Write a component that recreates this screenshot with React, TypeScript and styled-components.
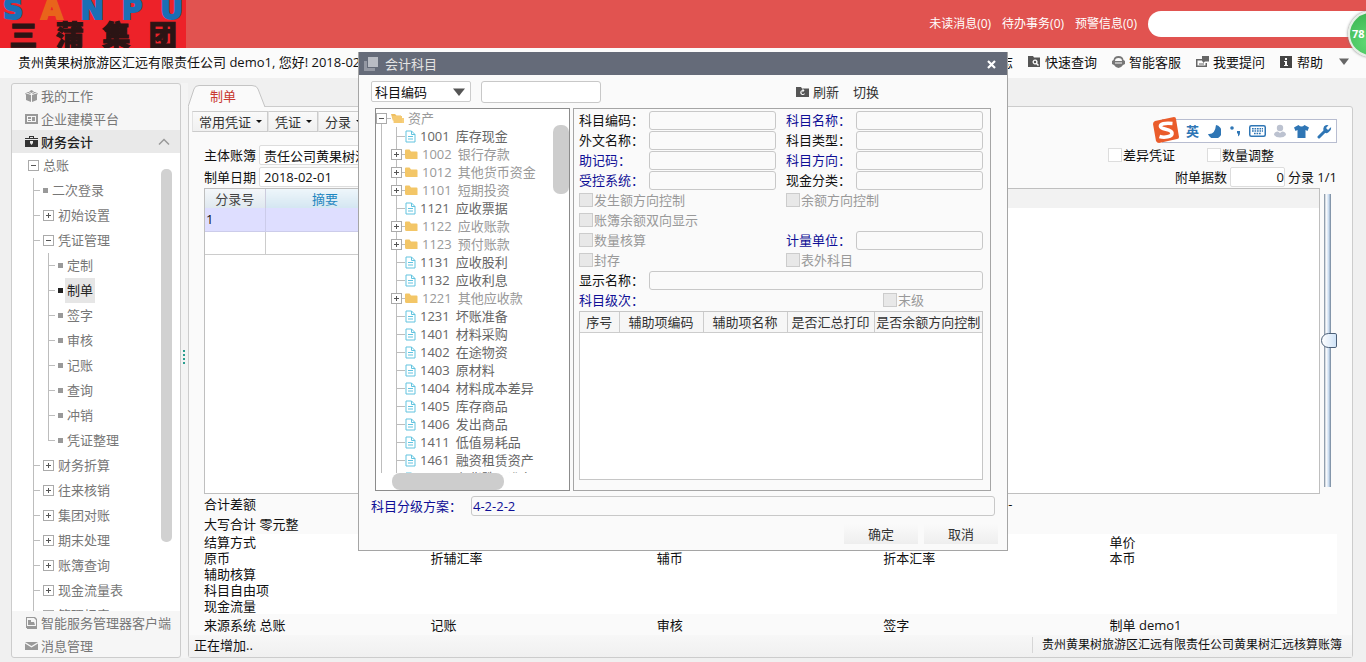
import React from 'react';
import styled, { createGlobalStyle, css } from 'styled-components';

const FONT = "'Open Sans', 'Noto Sans CJK SC', sans-serif";

const GlobalStyle = createGlobalStyle`
  * { box-sizing: border-box; }
  body { margin: 0; background: #f0f0f0; font: 13px/16px ${FONT}; color: #111; white-space: nowrap; }
  button, input, select { font: inherit; color: inherit; margin: 0; }
  button { border: 0; background: none; padding: 0; }
  ul { list-style: none; margin: 0; padding: 0; }
  a { color: inherit; text-decoration: none; }
  svg { flex: none; }
`;

const Page = styled.div`
  display: flex;
  flex-direction: column;
  min-height: 100vh;
  overflow: hidden;
`;

/* ---------- top banner ---------- */
const Banner = styled.header`
  display: flex;
  align-items: center;
  justify-content: space-between;
  height: 48px;
  background: #e15350;
`;
const Logo = styled.div`
  width: 186px;
  height: 48px;
  background: #ed2229;
`;
const LogoLatin = styled.div`
  display: flex;
  justify-content: space-between;
  height: 21px;
  padding: 0 3px;
  font: bold 28px/20px 'DejaVu Sans', sans-serif;
  color: #1a6fb5;
  -webkit-text-stroke: 2px;
  em { font-style: normal; color: #e8641b; }
`;
const LogoHan = styled.div`
  display: flex;
  justify-content: space-around;
  font: 900 28px/26px 'Noto Sans CJK SC', sans-serif;
  color: #2b1414;
  -webkit-text-stroke: 1px;
`;
const BannerRight = styled.nav`
  display: flex;
  align-items: center;
  gap: 11px;
  font-size: 12px;
  color: #fff;
`;
const Search = styled.input`
  width: 218px;
  height: 26px;
  border: 0;
  border-radius: 13px 0 0 13px;
  background: #fff;
`;
const MeterClip = styled.div`
  position: absolute;
  z-index: 5;
  top: 0;
  right: 0;
  width: 30px;
  height: 64px;
  overflow: hidden;
`;
const Meter = styled.div`
  position: absolute;
  top: 11px;
  right: -28px;
  width: 46px;
  height: 46px;
  padding-left: 2px;
  border: 2px solid #e6efe6;
  border-radius: 50%;
  background: radial-gradient(circle at 40% 70%, #5fd873, #35ad4c);
  box-shadow: 0 0 3px #777;
  color: #fff;
  font: bold 11px/42px ${FONT};
`;

/* ---------- greeting bar ---------- */
const SubBar = styled.div`
  display: flex;
  align-items: center;
  justify-content: space-between;
  height: 30px;
  padding: 0 16px 2px 18px;
  background: #fbfbfb;
`;
const Actions = styled.nav`
  display: flex;
  align-items: center;
  gap: 15px;
  a { display: flex; align-items: center; gap: 4px; height: 26px; }
`;

/* ---------- body ---------- */
const Body = styled.div`
  display: flex;
  flex: 1;
  padding: 5px 13px 4px 11px;
`;
const Side = styled.aside`
  display: flex;
  flex-direction: column;
  width: 170px;
  border: 1px solid #ccc;
  border-radius: 3px;
  background: #f6f6f6;
  color: #777;
`;
const SideItem = styled.a<{ $on?: boolean }>`
  display: flex;
  align-items: center;
  gap: 3px;
  height: 23px;
  padding: 0 10px 0 13px;
  ${p => p.$on && css`background: #e9e9e9; color: #222; font-weight: 500;`}
  span { flex: 1; }
`;
const SideTree = styled.div`
  display: flex;
  flex: 1 1 0;
  min-height: 0;
  overflow: hidden;
  background: #fff;
`;
const TreeBox = styled.div`
  flex: 1;
  height: 458px;
  overflow: hidden;
`;
const SideThumb = styled.div`
  width: 11px;
  height: 373px;
  margin: 16px 8px 0 0;
  border-radius: 5px;
  background: #d1d1d1;
`;
const vline = '#bdbdbd';
const TreeRow = styled.div<{ $indent?: number }>`
  display: flex;
  align-items: center;
  height: 25px;
  padding-left: ${p => p.$indent ?? 0}px;
`;
const Branch = styled.ul<{ $left: number; $open?: boolean }>`
  margin-left: ${p => p.$left}px;
  > li { background: linear-gradient(${vline}, ${vline}) 0 0 / 1px 100% no-repeat; }
  > li:last-child { background-size: 1px ${p => (p.$open ? '100%' : '13px')}; }
`;
const Tick = styled.i<{ $w: number; $gap?: number }>`
  width: ${p => p.$w}px;
  height: 1px;
  margin-right: ${p => p.$gap ?? 0}px;
  background: ${vline};
`;
const Bullet = styled.i<{ $on?: boolean }>`
  width: 5px;
  height: 5px;
  margin-right: 2px;
  background: ${p => (p.$on ? '#222' : '#999')};
`;
const NodeText = styled.span<{ $on?: boolean; $box?: boolean }>`
  padding: 0 2px 0 ${p => (p.$box ? 4 : 2)}px;
  line-height: 25px;
  ${p => p.$on && css`background: #e6e6e6; color: #222;`}
`;

const Splitter = styled.div`
  display: flex;
  flex-direction: column;
  align-items: center;
  justify-content: center;
  gap: 2px;
  width: 7px;
  padding: 0 2px 28px 0;
  background: #f4f4f4;
  i { width: 2px; height: 2px; background: #2a9d8f; }
`;
const Main = styled.main`
  display: flex;
  flex: 1;
  flex-direction: column;
  min-width: 0;
  padding-top: 2px;
`;
const Tab = styled.button`
  position: relative;
  align-self: flex-start;
  z-index: 1;
  width: 78px;
  height: 22px;
  margin-bottom: -1px;
  padding-right: 8px;
  color: #c8382f;
  svg { position: absolute; left: 0; top: 0; }
  span { position: relative; }
`;
const Panel = styled.section`
  display: flex;
  flex: 1;
  flex-direction: column;
  padding-top: 4px;
  border: 1px solid #ccc;
  border-radius: 0 3px 3px 3px;
  background: #fafafa;
`;
const ToolBar = styled.div`
  display: flex;
  height: 21px;
  margin: 0 3px 12px;
`;
const ToolButton = styled.button`
  display: flex;
  align-items: center;
  gap: 5px;
  padding: 0 5px 0 6px;
  border: 1px solid #ccc;
  border-left-color: #e2e2e2;
  background: linear-gradient(#fafafa, #f0f0f0);
  color: #333;
`;
const Caret = styled.i`
  border: 3px solid transparent;
  border-top-color: #111;
  border-bottom: 0;
`;
const Content = styled.div`
  display: flex;
  flex: 1;
  flex-direction: column;
  padding: 0 15px;
`;
const HeadRow = styled.div`
  display: flex;
  align-items: center;
  justify-content: space-between;
  height: 22px;
`;
const Group = styled.div<{ $gap?: number; $end?: number }>`
  display: flex;
  align-items: center;
  gap: ${p => p.$gap ?? 0}px;
  padding-right: ${p => p.$end ?? 0}px;
`;
const BookLabel = styled.label`
  display: flex;
  align-items: center;
  gap: 3px;
`;
const PlainInput = styled.input<{ $w: number; $right?: boolean }>`
  width: ${p => p.$w}px;
  height: 20px;
  padding: 0 2px 0 4px;
  border: 1px solid #ddd;
  border-radius: 2px;
  background: #fff;
  ${p => p.$right && css`padding-right: 0; text-align: right;`}
`;
const GridArea = styled.div`
  display: flex;
  flex: 1;
`;
const GridFrame = styled.div`
  flex: 1;
  border: 1px solid #bfbfbf;
  background: linear-gradient(#f2f2f2, #f2f2f2) 0 0 / 100% 19px no-repeat #fff;
`;
const EntryTable = styled.table`
  border-collapse: collapse;
  table-layout: fixed;
  width: 180px;
  th { height: 19px; padding: 0; border-right: 1px solid #ccd; background: linear-gradient(#f4f7fa, #dfe8ef); font-weight: 400; color: #444; }
  th + th { background: linear-gradient(#eef6fb, #d4e6f1); color: #1d86c0; }
  td { height: 23px; padding: 0 1px; border-right: 1px solid #ccc; border-bottom: 1px solid #ccc; }
  tr:first-child td { background: #dedeff; border-color: #ccccea; }
`;
const Range = styled.input`
  appearance: none;
  writing-mode: vertical-lr;
  width: 17px;
  margin: 6px 0 7px;
  background: linear-gradient(90deg, #6f8195, #fff 30%, #c5d9ef 70%, #6f8195) 4px 0 / 7px 100% no-repeat;
  &::-webkit-slider-thumb {
    appearance: none;
    width: 16px;
    height: 15px;
    border: 1px solid #4c6078;
    border-radius: 8px 2px 2px 8px;
    background: linear-gradient(90deg, #fff, #cfe3f7);
  }
`;
const Totals = styled.div<{ $h: number; $white?: boolean }>`
  display: grid;
  grid-template-columns: repeat(5, 1fr);
  align-items: center;
  height: ${p => p.$h}px;
  padding-right: 1px;
  ${p => p.$white && css`background: #fff;`}
`;
const Trail = styled.span`
  grid-column: 4;
  padding-left: 125px;
`;
const Status = styled.footer`
  display: flex;
  align-items: center;
  justify-content: space-between;
  height: 22px;
  padding: 0 10px 2px 5px;
  background: linear-gradient(#f7f7f7, #f0f0f0);
`;
const StatusBook = styled.span`
  padding-left: 9px;
  border-left: 1px solid #d6d6d6;
  font-size: 12px;
`;

/* ---------- tick boxes ---------- */
const TickLabel = styled.label<{ $off?: boolean }>`
  display: flex;
  align-items: center;
  gap: 1px;
  color: ${p => (p.$off ? '#999' : '#111')};
  input {
    appearance: none;
    width: 14px;
    height: 14px;
    border: 1px solid ${p => (p.$off ? '#ccc' : '#ddd')};
    background: ${p => (p.$off ? '#e8e8e8' : '#fff')};
  }
`;

/* ---------- input-method bar ---------- */
const Ime = styled.div`
  position: absolute;
  z-index: 3;
  top: 119px;
  right: 29px;
  display: flex;
  align-items: center;
  justify-content: space-between;
  width: 175px;
  height: 24px;
  padding: 0 4px 0 23px;
  border: 1px solid #b8bdd0;
  background: #fff;
  color: #2f76b5;
  font-weight: 700;
`;
const ImeLogo = styled.svg`
  position: absolute;
  left: -11px;
  top: -4px;
`;

/* ---------- dialog ---------- */
const Overlay = styled.div`
  position: absolute;
  z-index: 4;
  top: 52px;
  left: 0;
  right: 0;
  display: flex;
  justify-content: center;
  pointer-events: none;
`;
const Dialog = styled.section`
  width: 650px;
  border: 1px solid #a5a5a5;
  border-top: 0;
  background: #fafafa;
  pointer-events: auto;
`;
const DialogHead = styled.header`
  display: flex;
  align-items: center;
  gap: 7px;
  height: 23px;
  padding: 0 11px 0 5px;
  background: #656b79;
  color: #e4e4e4;
  span { flex: 1; }
`;
const DialogTools = styled.div`
  display: flex;
  align-items: center;
  height: 33px;
  padding: 0 12px;
  color: #333;
`;
const SelectBox = styled.div`
  position: relative;
  display: flex;
  align-items: center;
  width: 100px;
  margin-right: 10px;
  svg { position: absolute; right: 6px; pointer-events: none; }
`;
const Select = styled.select`
  appearance: none;
  width: 100%;
  height: 21px;
  padding: 0 3px;
  border: 1px solid #ccc;
  border-radius: 2px;
  background: #fff;
  color: #111;
`;
const Box = styled.input<{ $w?: number; $h?: number; $fill?: string }>`
  ${p => (p.$w ? `width: ${p.$w}px;` : 'flex: 1; min-width: 0;')}
  height: ${p => p.$h ?? 19}px;
  padding: 0 1px;
  border: 1px solid #c8c8c8;
  border-radius: 3px;
  background: ${p => p.$fill ?? '#fafafa'};
`;
const ToolLink = styled.button<{ $push?: number }>`
  display: flex;
  align-items: center;
  gap: 4px;
  margin-left: ${p => p.$push ?? 0}px;
`;
const Split = styled.div`
  display: flex;
  gap: 3px;
  height: 383px;
  padding: 0 16px;
`;
const Accounts = styled.div`
  display: flex;
  flex: none;
  flex-direction: column;
  width: 195px;
  border: 1px solid #8c8c8c;
  background: #fff;
`;
const AccountsView = styled.div`
  display: flex;
  height: 364px;
`;
const AccountsClip = styled.div`
  flex: 1;
  min-width: 0;
  overflow: hidden;
  background: linear-gradient(${vline}, ${vline}) 5px 14px / 1px 100% no-repeat;
`;
const AccountsThumb = styled.div`
  width: 16px;
  height: 69px;
  margin-top: 16px;
  border-radius: 7px;
  background: #cdcdcd;
`;
const AccountsHThumb = styled.div`
  width: 112px;
  height: 17px;
  margin-left: 16px;
  border-radius: 8px;
  background: #cdcdcd;
`;
const AccountRow = styled.li<{ $folder?: boolean }>`
  display: flex;
  align-items: center;
  height: 18px;
  color: ${p => (p.$folder ? '#999' : '#666')};
`;
const AccountList = styled.ul`
  margin-left: 15px;
  background: linear-gradient(${vline}, ${vline}) 5px 0 / 1px 100% no-repeat;
`;
const Lead = styled.span`
  display: flex;
  flex: none;
  align-items: center;
  justify-content: flex-end;
  width: 14px;
`;
const AccountName = styled.span`
  display: flex;
  gap: 6px;
  padding-left: 4px;
`;
const Detail = styled.div`
  display: flex;
  flex: 1;
  flex-direction: column;
  min-width: 0;
  padding: 1px 7px 10px 5px;
  border: 1px solid #a5a5a5;
`;
const Fields = styled.div`
  display: grid;
  grid-template-columns: repeat(2, minmax(0, 1fr));
  column-gap: 10px;
  grid-auto-rows: 20px;
  align-items: center;
`;
const Field = styled.label<{ $blue?: boolean; $wide?: boolean }>`
  display: flex;
  align-items: center;
  color: ${p => (p.$blue ? '#0f0f96' : '#111')};
  ${p => p.$wide && css`grid-column: 1 / -1;`}
  > span { flex: none; width: 70px; }
`;
const Level = styled.div`
  grid-column: 1 / -1;
  display: flex;
  justify-content: space-between;
  padding-right: 59px;
`;
const AuxFrame = styled.div`
  flex: 1;
  margin-top: 1px;
  border: 1px solid #c6c6c6;
  background: #fff;
`;
const AuxTable = styled.table`
  width: 100%;
  table-layout: fixed;
  border-collapse: collapse;
  th { height: 20px; padding: 0; border-right: 1px solid #ccc; border-bottom: 1px solid #ccc; background: #f6f6f6; font-weight: 400; color: #333; }
  th:last-child { border-right: 0; }
`;
const Scheme = styled.label`
  display: flex;
  align-items: center;
  padding: 5px 12px 8px;
  color: #0f0f96;
  span { width: 100px; }
`;
const Buttons = styled.div`
  display: flex;
  justify-content: flex-end;
  gap: 6px;
  padding: 0 9px 6px;
`;
const PushButton = styled.button`
  width: 74px;
  height: 20px;
  background: linear-gradient(#fafafa, #eeeeee);
  color: #333;
`;

/* ---------- drawings ---------- */
const Toggle = ({ open }: { open?: boolean }) => (
  <svg width="11" height="11" viewBox="0 0 11 11" shapeRendering="crispEdges">
    <rect x=".5" y=".5" width="10" height="10" fill="#fff" stroke="#aaa" />
    <path d={open ? 'M3 5.500h5' : 'M3 5.500h5M5.500 3v5'} stroke="#555" />
  </svg>
);
const Folder = () => (
  <svg width="13" height="11" viewBox="0 0 13 11">
    <path d="M0 1.500Q0 .5 1 .5h3.500l1.500 2h5.500q1 0 1 1V10H1.500Q0 10 0 8.500z" fill="#f3c667" />
  </svg>
);
const OpenFolder = () => (
  <svg width="13" height="11" viewBox="0 0 13 11">
    <path d="M0 1h4l1.500 1.500H10V4H3.500L2 8z" fill="#efc063" />
    <path d="M4 5h9v5H2.500z" fill="#f7cf7c" />
    <path d="M1 3h10v7H3z" fill="#f5ca72" />
  </svg>
);
const Leaf = () => (
  <svg width="11" height="13" viewBox="0 0 11 13" fill="none" stroke="#62c3df">
    <path d="M1 1h5.500L10 4.500V12H1zM6.500 1v3.500H10M3 6.500h5M3 9h5" />
  </svg>
);
const Gray = ({ children, color = '#999' }: { children: React.ReactNode; color?: string }) => (
  <svg width="13" height="12" viewBox="0 0 13 12" fill={color}>{children}</svg>
);
const Chevron = () => (
  <svg width="12" height="8" viewBox="0 0 12 8" fill="none" stroke="#999" strokeWidth="1.500"><path d="M1 6.500 6 1.500l5 5" /></svg>
);

/* ---------- data ---------- */
type Node = { name: string; kind: 'leaf' | 'closed' | 'open' };
const ledger: Node[] = [
  { name: '二次登录', kind: 'leaf' },
  { name: '初始设置', kind: 'closed' },
  { name: '凭证管理', kind: 'open' },
  { name: '财务折算', kind: 'closed' },
  { name: '往来核销', kind: 'closed' },
  { name: '集团对账', kind: 'closed' },
  { name: '期末处理', kind: 'closed' },
  { name: '账簿查询', kind: 'closed' },
  { name: '现金流量表', kind: 'closed' },
  { name: '管理报表', kind: 'closed' },
];
const vouchers = ['定制', '制单', '签字', '审核', '记账', '查询', '冲销', '凭证整理'];
const accounts: [string, string, boolean][] = [
  ['1001', '库存现金', false], ['1002', '银行存款', true], ['1012', '其他货币资金', true],
  ['1101', '短期投资', true], ['1121', '应收票据', false], ['1122', '应收账款', true],
  ['1123', '预付账款', true], ['1131', '应收股利', false], ['1132', '应收利息', false],
  ['1221', '其他应收款', true], ['1231', '坏账准备', false], ['1401', '材料采购', false],
  ['1402', '在途物资', false], ['1403', '原材料', false], ['1404', '材料成本差异', false],
  ['1405', '库存商品', false], ['1406', '发出商品', false], ['1411', '低值易耗品', false],
  ['1461', '融资租赁资产', false], ['1471', '存货跌价准备', false],
];
const detailRows: string[][] = [
  ['结算方式', '', '', '', '单价'],
  ['原币', '折辅汇率', '辅币', '折本汇率', '本币'],
  ['辅助核算'], ['科目自由项'], ['现金流量'],
];

const Row5 = ({ cells, h, white }: { cells: string[]; h: number; white?: boolean }) => (
  <Totals $h={h} $white={white}>{cells.map((c, i) => <span key={i}>{c}</span>)}</Totals>
);
const Check = ({ text, off }: { text: string; off?: boolean }) => (
  <TickLabel $off={off}><input type="checkbox" disabled={off} />{text}</TickLabel>
);
const TextField = ({ text, blue, wide }: { text: string; blue?: boolean; wide?: boolean }) => (
  <Field $blue={blue} $wide={wide}><span>{text}：</span><Box readOnly /></Field>
);

const Sidebar = () => (
  <Side>
    <SideItem href="#">
      <Gray><path d="M6.500 0 9 1.500 6.500 3 4 1.500zM0 3l6 2v7l-5-2V5zM13 3 7 5v7l5-2V5zM1 2l3 0 2 2-1 0zM12 2H9L7 4h1z" /></Gray>
      <span>我的工作</span>
    </SideItem>
    <SideItem href="#">
      <Gray><path fillRule="evenodd" d="M0 1h13v10H0zM2 3v6h9V3zM3 4h3v2H3zM3 7h3v1H3zM7 4h3v4H7z" /></Gray>
      <span>企业建模平台</span>
    </SideItem>
    <SideItem href="#" $on>
      <Gray color="#333"><path fillRule="evenodd" d="M4 0h5v2h4v1H0V2h4zM5 1v1h3V1zM0 4h13v7H0zM5 5v2l1.500 2L8 7V5z" /></Gray>
      <span>财务会计</span>
      <Chevron />
    </SideItem>
    <SideTree>
      <TreeBox>
        <ul>
          <li>
            <TreeRow $indent={16}><Toggle open /><NodeText $box>总账</NodeText></TreeRow>
            <Branch $left={21} $open>
              {ledger.map(n => (
                <li key={n.name}>
                  <TreeRow>
                    <Tick $w={7} $gap={3} />
                    {n.kind === 'leaf' ? <Bullet /> : <Toggle open={n.kind === 'open'} />}
                    <NodeText $box={n.kind !== 'leaf'}>{n.name}</NodeText>
                  </TreeRow>
                  {n.kind === 'open' && (
                    <Branch $left={15}>
                      {vouchers.map(v => (
                        <li key={v}>
                          <TreeRow>
                            <Tick $w={7} $gap={3} />
                            <Bullet $on={v === '制单'} />
                            <NodeText $on={v === '制单'}>{v}</NodeText>
                          </TreeRow>
                        </li>
                      ))}
                    </Branch>
                  )}
                </li>
              ))}
            </Branch>
          </li>
        </ul>
      </TreeBox>
      <SideThumb />
    </SideTree>
    <SideItem href="#">
      <Gray><path fillRule="evenodd" d="M1 0h9l2 2v9H1zM2 1v8h9V3L9 1zM3 3h3v2h3l1 3H3zM2 11h10v1H2z" /></Gray>
      <span>智能服务管理器客户端</span>
    </SideItem>
    <SideItem href="#">
      <Gray><path d="M0 2h13L6.500 6zM0 3.500 6.500 7.500 13 3.500V10H0z" /></Gray>
      <span>消息管理</span>
    </SideItem>
  </Side>
);

const AccountDialog = () => (
  <Overlay>
    <Dialog role="dialog" aria-label="会计科目">
      <DialogHead>
        <svg width="14" height="14" viewBox="0 0 14 14"><path d="M4 0h10v10H4z" fill="#b9bcc4" /><path d="M0 4h3v7h8v3H0z" fill="#9498a3" /></svg>
        <span>会计科目</span>
        <button aria-label="关闭">
          <svg width="9" height="9" viewBox="0 0 9 9" stroke="#fff" strokeWidth="2.200"><path d="m1 1 7 7M8 1 1 8" /></svg>
        </button>
      </DialogHead>
      <DialogTools>
        <SelectBox>
          <Select aria-label="查询方式"><option>科目编码</option></Select>
          <svg width="12" height="8" viewBox="0 0 12 8"><path d="M0 .5h12L6 8z" fill="#555" /></svg>
        </SelectBox>
        <Box $w={120} $h={22} $fill="#fff" aria-label="查询内容" />
        <ToolLink $push={195}>
          <Gray color="#555"><path fillRule="evenodd" d="M0 1h5l1 1.500h7V11H0zM6.500 4A2.500 2.500 0 1 0 9 7.500H8A1.500 1.500 0 1 1 6.500 5v1.500l2-2-2-2z" /></Gray>
          刷新
        </ToolLink>
        <ToolLink $push={14}>切换</ToolLink>
      </DialogTools>
      <Split>
        <Accounts>
          <AccountsView>
            <AccountsClip>
              <ul>
                <AccountRow $folder><Toggle open /><Tick $w={4} /><OpenFolder /><AccountName>资产</AccountName></AccountRow>
              </ul>
              <AccountList>
                {accounts.map(([code, name, folder]) => (
                  <AccountRow key={code} $folder={folder}>
                    <Lead>{folder ? <><Toggle /><Tick $w={3} /></> : <Tick $w={8} />}</Lead>
                    {folder ? <Folder /> : <Leaf />}
                    <AccountName><span>{code}</span><span>{name}</span></AccountName>
                  </AccountRow>
                ))}
              </AccountList>
            </AccountsClip>
            <AccountsThumb />
          </AccountsView>
          <AccountsHThumb />
        </Accounts>
        <Detail>
          <Fields>
            <TextField text="科目编码" /><TextField text="科目名称" blue />
            <TextField text="外文名称" /><TextField text="科目类型" />
            <TextField text="助记码" blue /><TextField text="科目方向" blue />
            <TextField text="受控系统" blue /><TextField text="现金分类" />
            <Check off text="发生额方向控制" /><Check off text="余额方向控制" />
            <Check off text="账簿余额双向显示" /><span />
            <Check off text="数量核算" /><TextField text="计量单位" blue />
            <Check off text="封存" /><Check off text="表外科目" />
            <TextField text="显示名称" wide />
            <Level><Field as="span" $blue>科目级次：</Field><Check off text="末级" /></Level>
          </Fields>
          <AuxFrame>
            <AuxTable>
              <colgroup><col width="39" /><col width="84" /><col width="84" /><col width="87" /><col /></colgroup>
              <thead><tr><th>序号</th><th>辅助项编码</th><th>辅助项名称</th><th>是否汇总打印</th><th>是否余额方向控制</th></tr></thead>
            </AuxTable>
          </AuxFrame>
        </Detail>
      </Split>
      <Scheme><span>科目分级方案：</span><Box $h={20} readOnly value="4-2-2-2" /></Scheme>
      <Buttons><PushButton>确定</PushButton><PushButton>取消</PushButton></Buttons>
    </Dialog>
  </Overlay>
);

const ImeBar = () => (
  <Ime>
    <ImeLogo width="28" height="28" viewBox="0 0 28 28">
      <path d="M3 5 22 1q2 0 2 2l3 18q0 2-2 2L7 27q-2 0-3-2L1 8q0-2 2-3z" fill="#ea5c2b" />
      <path d="M20.500 7.500Q8 6.500 8.500 10.500c.5 3.500 11 2 11.500 6.500.5 4-8 5-12.500 3.500" fill="none" stroke="#fff" strokeWidth="3.600" />
    </ImeLogo>
    <span>英</span>
    <svg width="14" height="14" viewBox="0 0 14 14" fill="#2f76b5"><path d="M9 1a7 7 0 1 1-8 9q7 1 8-9z" /></svg>
    <svg width="12" height="14" viewBox="0 0 12 14" fill="#2f76b5"><circle cx="3" cy="4" r="1.800" /><path d="M8 7h3v2q0 3-2 3.500v-3H8z" /></svg>
    <svg width="17" height="12" viewBox="0 0 17 12"><rect x=".75" y=".75" width="15.500" height="10.500" rx="1.500" fill="none" stroke="#2f76b5" strokeWidth="1.500" /><path d="M3 3.700h11M3 6h11M5 8.500h7" stroke="#2f76b5" strokeWidth="1.500" strokeDasharray="1.700 .8" /></svg>
    <svg width="12" height="14" viewBox="0 0 12 14" fill="#bcc2d0"><circle cx="6" cy="4" r="3.200" /><path d="M0 11q0-3.500 4-3.500l2 1.500 2-1.500q4 0 4 3.500-2 2.500-6 2.500T0 11z" /></svg>
    <svg width="15" height="14" viewBox="0 0 15 14" fill="#2f76b5"><path d="M4.500 1Q7.500 4 10.500 1L15 3.500 13.500 7 11.500 6v8h-8V6l-2 1L0 3.500z" /></svg>
    <svg width="15" height="15" viewBox="0 0 15 15"><path d="M2 13 8 7" stroke="#2f76b5" strokeWidth="3" strokeLinecap="round" /><path d="M13.500 3.500 11 6 9 4l2.500-2.700Q8.500.3 7 2.500T7 7.500t4.500.8 2.700-4.800z" fill="#2f76b5" /></svg>
  </Ime>
);

export default function App() {
  return (
    <>
      <GlobalStyle />
      <Page>
        <Banner>
          <Logo>
            <LogoLatin><span>S</span><em>A</em><span>N</span><span>P</span><span>U</span></LogoLatin>
            <LogoHan><span>三</span><span>蒲</span><span>集</span><span>团</span></LogoHan>
          </Logo>
          <BannerRight>
            <a href="#">未读消息(0)</a><a href="#">待办事务(0)</a><a href="#">预警信息(0)</a>
            <Search aria-label="搜索" />
          </BannerRight>
        </Banner>
        <SubBar>
          <span>贵州黄果树旅游区汇远有限责任公司 demo1, 您好! 2018-02-01</span>
          <Actions>
            <a href="#">日志</a>
            <a href="#"><Gray color="#555"><path fillRule="evenodd" d="M0 0h5l1 1.500h6V11H0zM7 3.500a2.500 2.500 0 1 0 1.200 4.700L10 10l1-1-1.700-1.700A2.500 2.500 0 0 0 7 3.500zm0 1.300a1.200 1.200 0 1 1 0 2.400 1.200 1.200 0 0 1 0-2.400z" /></Gray>快速查询</a>
            <a href="#"><Gray color="#777"><path fillRule="evenodd" d="M6.500 0Q11 0 11.500 4L13 5v3l-2 1q-2 3-4.500 3T2 9L0 8V5l1.500-1Q2 0 6.500 0zM6.500 2Q3 2 3 5h7Q10 2 6.500 2zM3 6.500v1h7v-1z" /></Gray>智能客服</a>
            <a href="#"><Gray color="#666"><path fillRule="evenodd" d="M0 3h6v1.500H1.500v5h8V7H11v4H0zM6 0h7v5.500H9L7 7V5.500H6zM3 7.500h5v1H3z" /></Gray>我要提问</a>
            <a href="#"><Gray color="#444"><path fillRule="evenodd" d="M0 0h12v12H0zM5 2v2h2V2zM4 5v1h1v3H4v1h4V9H7V5z" /></Gray>帮助</a>
            <svg width="12" height="8" viewBox="0 0 12 8"><path d="M1 .5h10L6 7z" fill="#666" /></svg>
          </Actions>
        </SubBar>
        <Body>
          <Sidebar />
          <Splitter><i /><i /><i /><i /></Splitter>
          <Main>
            <Tab>
              <svg width="78" height="22" viewBox="0 0 78 22"><path d="M0 22 6 4Q7 .5 11 .5h53q5 0 6 3.500L77 22" fill="#fafafa" stroke="#c4c4c4" /></svg>
              <span>制单</span>
            </Tab>
            <Panel>
              <ToolBar>
                <ToolButton>常用凭证<Caret /></ToolButton>
                <ToolButton>凭证<Caret /></ToolButton>
                <ToolButton>分录<Caret /></ToolButton>
              </ToolBar>
              <Content>
                <HeadRow>
                  <BookLabel>主体账簿<PlainInput $w={220} readOnly value="责任公司黄果树汇远核算账簿" /></BookLabel>
                  <Group $gap={32} $end={63}><Check text="差异凭证" /><Check text="数量调整" /></Group>
                </HeadRow>
                <HeadRow>
                  <BookLabel>制单日期<PlainInput $w={120} readOnly value="2018-02-01" /></BookLabel>
                  <Group $gap={3}><BookLabel>附单据数<PlainInput $w={55} $right readOnly value="0" /></BookLabel>分录 1/1</Group>
                </HeadRow>
                <GridArea>
                  <GridFrame>
                    <EntryTable>
                      <colgroup><col width="60" /><col width="120" /></colgroup>
                      <thead><tr><th>分录号</th><th>摘要</th></tr></thead>
                      <tbody><tr><td>1</td><td /></tr><tr><td /><td /></tr></tbody>
                    </EntryTable>
                  </GridFrame>
                  <Range type="range" aria-label="行位置" defaultValue={50} />
                </GridArea>
                <Totals $h={20}><span>合计差额</span><Trail>-</Trail></Totals>
                <Totals $h={20}><span>大写合计 零元整</span></Totals>
                {detailRows.map(r => <Row5 key={r[0]} cells={r} h={16} white />)}
                <Row5 cells={['来源系统 总账', '记账', '审核', '签字', '制单 demo1']} h={21} />
              </Content>
              <Status><span>正在增加..</span><StatusBook>贵州黄果树旅游区汇远有限责任公司黄果树汇远核算账簿</StatusBook></Status>
            </Panel>
          </Main>
        </Body>
      </Page>
      <ImeBar />
      <AccountDialog />
      <MeterClip><Meter>78</Meter></MeterClip>
    </>
  );
}
